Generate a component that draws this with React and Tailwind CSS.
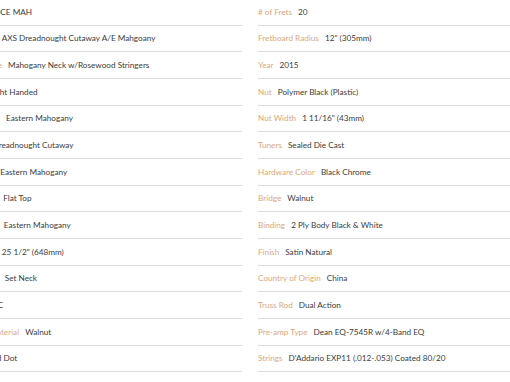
import React from "react";

const leftSpecs = [
  ["Stock #", "AXS DCE MAH"],
  ["Product Name", "AXS Dreadnought Cutaway A/E Mahgoany"],
  ["Neck Build Type", "Mahogany Neck w/Rosewood Stringers"],
  ["Hand Type", "Right Handed"],
  ["Top Wood Type", "Eastern Mahogany"],
  ["Body Shape", "Dreadnought Cutaway"],
  ["Body Material", "Eastern Mahogany"],
  ["Body Top Style", "Flat Top"],
  ["Neck Materials", "Eastern Mahogany"],
  ["Scale Measure", "25 1/2\" (648mm)"],
  ["Neck Assembly", "Set Neck"],
  ["Neck Outline", "C"],
  ["Fingerboard Material", "Walnut"],
  ["Marks", "Pearloid Dot"],
];

const rightSpecs = [
  ["# of Frets", "20"],
  ["Fretboard Radius", "12\" (305mm)"],
  ["Year", "2015"],
  ["Nut", "Polymer Black (Plastic)"],
  ["Nut Width", "1 11/16\" (43mm)"],
  ["Tuners", "Sealed Die Cast"],
  ["Hardware Color", "Black Chrome"],
  ["Bridge", "Walnut"],
  ["Binding", "2 Ply Body Black & White"],
  ["Finish", "Satin Natural"],
  ["Country of Origin", "China"],
  ["Truss Rod", "Dual Action"],
  ["Pre-amp Type", "Dean EQ-7545R w/4-Band EQ"],
  ["Strings", "D'Addario EXP11 (.012-.053) Coated 80/20"],
];

function SpecRow({ label, value }) {
  return (
    <li className="flex items-center h-[26.67px] border-b border-[#dcdcdc] whitespace-nowrap">
      <span className="text-[#dba97c] mr-[6px]">{label}</span>
      <span className="text-[#3c3c3c]">{value}</span>
    </li>
  );
}

export default function App() {
  return (
    <div className="w-[510px] h-[382px] overflow-hidden bg-white">
      <div
        className="grid grid-cols-[298px_298px] gap-x-[16px] ml-[-56px] mt-[-1px] text-[8.2px] leading-none"
        style={{ fontFamily: "Lato, 'Open Sans', sans-serif" }}
      >
        <ul>
          {leftSpecs.map(([l, v]) => (
            <SpecRow key={l} label={l} value={v} />
          ))}
        </ul>
        <ul>
          {rightSpecs.map(([l, v]) => (
            <SpecRow key={l} label={l} value={v} />
          ))}
        </ul>
      </div>
    </div>
  );
}
